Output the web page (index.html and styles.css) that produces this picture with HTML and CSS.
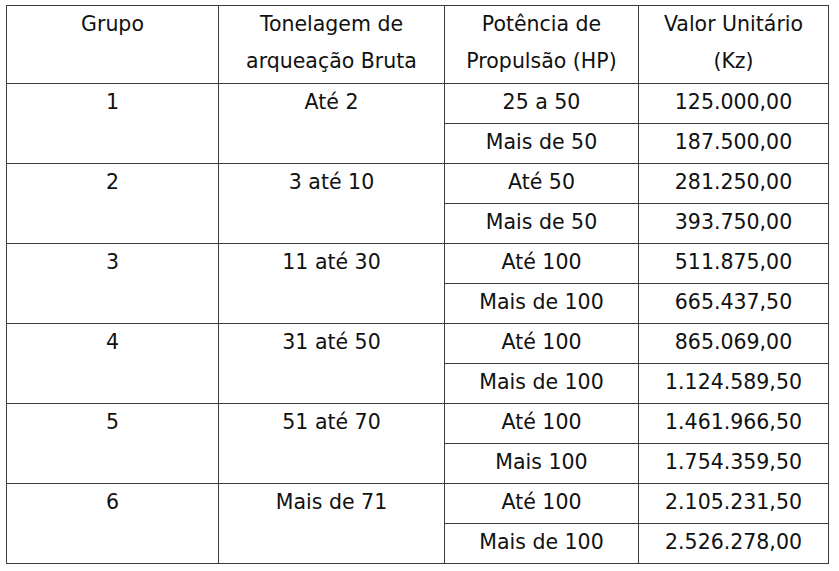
FILE: index.html
```html
<!DOCTYPE html>
<html lang="pt">
<head>
<meta charset="utf-8">
<link rel="stylesheet" href="styles.css">
</head>
<body>
<div class="page">
<table class="tabela">
  <colgroup>
    <col class="c1"><col class="c2"><col class="c3"><col class="c4">
  </colgroup>
  <thead>
    <tr>
      <th>Grupo</th>
      <th>Tonelagem de<br>arqueação Bruta</th>
      <th>Potência de<br>Propulsão (HP)</th>
      <th>Valor Unitário<br>(Kz)</th>
    </tr>
  </thead>
  <tbody>
    <tr><td rowspan="2">1</td><td rowspan="2">Até 2</td><td>25 a 50</td><td>125.000,00</td></tr>
    <tr><td>Mais de 50</td><td>187.500,00</td></tr>
    <tr><td rowspan="2">2</td><td rowspan="2">3 até 10</td><td>Até 50</td><td>281.250,00</td></tr>
    <tr><td>Mais de 50</td><td>393.750,00</td></tr>
    <tr><td rowspan="2">3</td><td rowspan="2">11 até 30</td><td>Até 100</td><td>511.875,00</td></tr>
    <tr><td>Mais de 100</td><td>665.437,50</td></tr>
    <tr><td rowspan="2">4</td><td rowspan="2">31 até 50</td><td>Até 100</td><td>865.069,00</td></tr>
    <tr><td>Mais de 100</td><td>1.124.589,50</td></tr>
    <tr><td rowspan="2">5</td><td rowspan="2">51 até 70</td><td>Até 100</td><td>1.461.966,50</td></tr>
    <tr><td>Mais 100</td><td>1.754.359,50</td></tr>
    <tr><td rowspan="2">6</td><td rowspan="2">Mais de 71</td><td>Até 100</td><td>2.105.231,50</td></tr>
    <tr><td>Mais de 100</td><td>2.526.278,00</td></tr>
  </tbody>
</table>
</div>
</body>
</html>
```
FILE: styles.css
```css
html, body {
  margin: 0;
  padding: 0;
  background: #ffffff;
}
.page {
  padding: 5px 0 0 6px;
}
.tabela {
  border-collapse: collapse;
  table-layout: fixed;
  width: 823px;
  font-family: "DejaVu Sans", Verdana, sans-serif;
  font-size: 20.5px;
  color: #111111;
}
.c1 { width: 212px; }
.c2 { width: 226px; }
.c3 { width: 194px; }
.c4 { width: 190px; }
.tabela th,
.tabela td {
  border: 1px solid #3c3c3c;
  padding: 0 0 2px 0;
  line-height: 37px;
  text-align: center;
  vertical-align: top;
  font-weight: normal;
}
.tabela thead th {
  padding-bottom: 3px;
}
```
